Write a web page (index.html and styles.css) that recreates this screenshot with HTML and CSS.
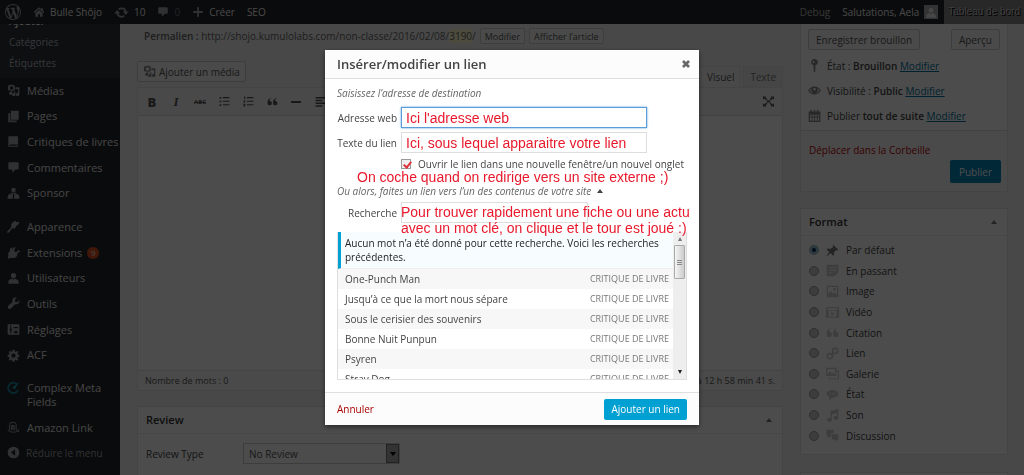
FILE: index.html
```html
<!DOCTYPE html>
<html lang="fr">
<head>
<meta charset="utf-8">
<title>Modifier l’article ‹ Bulle Shôjo</title>
<link rel="stylesheet" href="styles.css">
</head>
<body>
<svg class="sprite" aria-hidden="true">
  <symbol id="wp" viewBox="0 0 20 20"><path d="M20 10c0-5.51-4.49-10-10-10C4.48 0 0 4.49 0 10c0 5.52 4.48 10 10 10 5.51 0 10-4.48 10-10zM7.78 15.37L4.37 6.22c.55-.02 1.17-.08 1.17-.08.5-.06.44-1.13-.06-1.11 0 0-1.45.11-2.37.11-.18 0-.37 0-.58-.01C4.12 2.69 6.87 1.11 10 1.11c2.33 0 4.45.87 6.05 2.34-.68-.11-1.65.39-1.65 1.58 0 .74.45 1.36.9 2.1.35.61.55 1.36.55 2.46 0 1.49-1.4 5-1.4 5l-3.03-8.37c.54-.02.82-.17.82-.17.5-.05.44-1.25-.06-1.22 0 0-1.44.12-2.38.12-.87 0-2.33-.12-2.33-.12-.5-.03-.56 1.2-.06 1.22l.92.08 1.26 3.41zM17.41 10c.24-.64.74-1.87.43-4.25.7 1.29 1.05 2.71 1.05 4.25 0 3.29-1.73 6.24-4.4 7.78.97-2.59 1.94-5.2 2.92-7.78zM6.1 18.09C3.12 16.65 1.11 13.53 1.11 10c0-1.3.23-2.48.72-3.59C3.25 10.3 4.67 14.2 6.1 18.09zm4.03-6.63l2.58 6.98c-.86.29-1.76.45-2.71.45-.79 0-1.57-.11-2.29-.33.81-2.38 1.62-4.74 2.42-7.1z"/></symbol>
  <symbol id="home" viewBox="0 0 20 20"><path d="M10 2 1 10l1.500 1.500L10 5l7.500 6.500L19 10l-2.500-2.300V3h-2.500v2.500zM10 6.500 4 11.700V18h4.500v-4.500h3V18H16v-6.300z"/></symbol>
  <symbol id="update" viewBox="0 0 20 20"><path d="M10.200 3.300a6.700 6.700 0 0 1 6.500 5.400H19.500l-3.800 4.500-3.800-4.500h2.300a4.300 4.300 0 0 0-7-2L5.400 5A6.700 6.700 0 0 1 10.200 3.300zM4.300 6.800l3.800 4.500H5.800a4.300 4.300 0 0 0 7 2l1.800 1.700a6.700 6.700 0 0 1-11.300-3.700H.5z"/></symbol>
  <symbol id="comment" viewBox="0 0 20 20"><path d="M4 2h12a2 2 0 0 1 2 2v7a2 2 0 0 1-2 2h-3l-5 5v-5H4a2 2 0 0 1-2-2V4a2 2 0 0 1 2-2z"/></symbol>
  <symbol id="plus" viewBox="0 0 20 20"><path d="M8.500 2h3v6.500H18v3h-6.500V18h-3v-6.500H2v-3h6.500z"/></symbol>
  <symbol id="media" viewBox="0 0 20 20"><path fill-rule="evenodd" d="M3 2h1l1-1h4l1 1h1q1 0 1 1v6q0 1-1 1H9l-1 1v4.500A2.500 2.500 0 1 1 6.500 12V10H3Q1.500 10 1.500 8.500V3.500Q1.500 2 3 2zm4 1.500a2.700 2.700 0 1 0 0 5.400 2.700 2.700 0 0 0 0-5.400zM13 5h6v11a2.600 2.600 0 1 1-2-2.500V8h-4zM13 12v4.500a2.500 2.500 0 1 1-2-2.500v-3z"/></symbol>
  <symbol id="pages" viewBox="0 0 20 20"><path d="M6 1h12v14H6zM2 5h3v11h10v3H2z"/></symbol>
  <symbol id="book" viewBox="0 0 20 20"><path fill-rule="evenodd" d="M3 2h14v12h-1v2.500h1V18H3q-1-1-1-2V4q0-1 1-2zm1 12.500v2h11v-2z"/></symbol>
  <symbol id="user" viewBox="0 0 20 20"><circle cx="10" cy="5.500" r="4"/><path d="M2 18v-3q0-3 3.500-4L8 10l2 2 2-2 2.500 1Q18 12 18 15v3z"/></symbol>
  <symbol id="sponsor" viewBox="0 0 20 20"><circle cx="10" cy="4.500" r="3.500"/><path d="M6.500 9h7v3l1.500-2q4 2 4 5v3h-8V10h-2v8H1v-3q0-3 4-5l1.500 2z"/></symbol>
  <symbol id="brush" viewBox="0 0 20 20"><path d="m8.500 4 4-3 2 2 5 .500-2 3-2.500 2-3 4.500-3-.500-2 1-3 5L1 20l-1-2 4-4 3-4-1-2.500z"/></symbol>
  <symbol id="plug" viewBox="0 0 20 20"><path d="m11 1 2 2-2.500 4 3 3L18 6l2 2-4.500 4q1 3-2.500 5.500-4 2-7 .5L3 19.500 1 18l1-3V10l2-1 1-5 3-2v4z"/></symbol>
  <symbol id="wrench" viewBox="0 0 20 20"><path d="M17 7.500 13 8l-1-3.500L15 1q-4-1-6 1.500-1.500 2-.500 5L1.500 14Q.5 16 2 17.700q2 1.500 4 0L12.500 11q3 1 5-1Q20 8 18.500 4z"/></symbol>
  <symbol id="settings" viewBox="0 0 20 20"><path fill-rule="evenodd" d="M2 2h16q1 0 1 1v14q0 1-1 1H2q-1 0-1-1V3q0-1 1-1zm3 2v5H4v2h1v5h1.500v-5H8V9H6.500V4zm5 2v2h7V6zm3 5v2h-3v2h3v1.500h1.500V15H17v-2h-2.500v-2z"/></symbol>
  <symbol id="gear" viewBox="0 0 20 20"><path fill-rule="evenodd" d="M8.500 1h3l.5 2.700 1.400.6L15.600 3 17.500 4.800 16 7l.6 1.500L19 9v3l-2.500.5-.6 1.300 1.500 2.200-2 2-2.200-1.500-1.300.6-.5 2.400h-3l-.5-2.500-1.300-.5L4.500 18l-2-2L4 13.800l-.6-1.300L1 12V9l2.400-.5L4 7 2.500 4.800 4.500 3l2.200 1.300L8 3.700zM10 7a3.300 3.300 0 1 0 0 6.600A3.300 3.300 0 0 0 10 7z"/></symbol>
  <symbol id="cmf" viewBox="0 0 20 20"><path d="M15 4.500A8 8 0 1 0 17 14" fill="none" stroke="#1c7f96" stroke-width="3"/><path d="m8 10 4 3 7-12-8 7z" fill="#1c9fb8"/></symbol>
  <symbol id="amazon" viewBox="0 0 20 20"><path d="M4 14V5q0-3 5-3t5 3v9M7 14V7h4v7M9 7v7M1 14q8 6 16 1l1 2M15 14h4" fill="none" stroke="currentColor" stroke-width="1.500"/></symbol>
  <symbol id="collapse" viewBox="0 0 20 20"><path fill-rule="evenodd" d="M10 1a9 9 0 1 0 0 18 9 9 0 0 0 0-18zm2.500 4v10L6 10z"/></symbol>
  <symbol id="quote" viewBox="0 0 20 20"><path d="M9 3Q4.500 4.500 4.500 9A4 4 0 1 1 1 13Q0 4.500 9 3zM19 3q-4.500 1.500-4.500 6A4 4 0 1 1 11 13q-1-8.500 8-10z"/></symbol>
  <symbol id="ul" viewBox="0 0 20 20"><path d="M1 2h3v3H1zm6 0h12v2H7zM1 8.500h3v3H1zm6 0h12v2H7zM1 15h3v3H1zm6 0h12v2H7z"/></symbol>
  <symbol id="ol" viewBox="0 0 20 20"><path d="M2 1h2v5H2zm5 1h12v2H7zM1 8h3v4H1zm6 .5h12v2H7zM1 14h3v5H1zm6 1h12v2H7z"/></symbol>
  <symbol id="left" viewBox="0 0 20 20"><path d="M1 2h18v2.500H1zm0 5h12v2.500H1zm0 5h18v2.500H1zm0 5h12v2.500H1z"/></symbol>
  <symbol id="full" viewBox="0 0 20 20"><path d="M0 1h6L4.500 2.500 8 6 6 8 2.500 4.500 0 7zm20 0v6l-2.500-2.500L14 8l-2-2 3.500-3.500L14 1zM0 19v-6l2.500 2.500L6 12l2 2-3.500 3.500L6 19zm20 0h-6l1.500-1.500L12 14l2-2 3.500 3.500L20 13zM7 8h6v4H7z"/></symbol>
  <symbol id="pin" viewBox="0 0 20 20"><path fill-rule="evenodd" d="M10 0a5 5 0 0 1 1.500 9.800L11 20H9L8.500 9.800A5 5 0 0 1 10 0zM8.500 3a1.500 1.500 0 1 0 0 3 1.500 1.500 0 0 0 0-3z"/></symbol>
  <symbol id="eye" viewBox="0 0 20 20"><path fill-rule="evenodd" d="M0 10q4-6 10-6t10 6q-4 6-10 6T0 10zm2 0q3.500 4.500 8 4.500t8-4.500q-2-2.500-4-3.500a5 5 0 1 1-8 0q-2 1-4 3.500zm8-4a2 2 0 1 0 0 4 2 2 0 0 0 0-4z"/></symbol>
  <symbol id="calendar" viewBox="0 0 20 20"><path fill-rule="evenodd" d="M1 4h3V1h2v3h3V1h2v3h3V1h2v3h3v16H1zm2 5v2.500h2.500V9zm4 0v2.500h2.500V9zm4 0v2.500h2.500V9zm4 0v2.500h2V9zM3 13v5h2.500v-5zm4 0v5h2.500v-5zm4 0v5h2.500v-5zm4 0v5h2v-5z"/></symbol>
  <symbol id="pushpin" viewBox="0 0 20 20"><path d="m11 1 8 8-1.500 1-2-.5-3.500 3.500.5 4-1.500 1-4-4L0 20l5-8-4-3.500L2 7l4.500.5L11 4.500 10.500 2z"/></symbol>
  <symbol id="aside" viewBox="0 0 20 20"><path fill-rule="evenodd" d="M1 1h18v12l-6 6H1zm3 4v1.500h12V5zm0 4v1.500h12V9zm0 4v1.500h6V13z"/></symbol>
  <symbol id="image" viewBox="0 0 20 20"><path fill-rule="evenodd" d="M1 1h18v18H1zm2 2v14h14V3z"/><path d="m3 15 4-6 3 4 3-2 4 4v2H3z"/><circle cx="13" cy="6.500" r="2"/></symbol>
  <symbol id="video" viewBox="0 0 20 20"><path fill-rule="evenodd" d="M0 2h20v16H0zm2 1.500V6h16V3.500zM4 7v9.500h12V7zm4 1.500 5 3.500-5 3.500z"/></symbol>
  <symbol id="link" viewBox="0 0 20 20"><g fill="none" stroke="currentColor" stroke-width="2.500"><circle cx="14" cy="6" r="4"/><circle cx="6" cy="14" r="4"/><path d="m8 12 4-4"/></g></symbol>
  <symbol id="gallery" viewBox="0 0 20 20"><path fill-rule="evenodd" d="M0 1h16v13H0zm2 2v9h12V3zM17 5h3v14H4v-3h1.500v1.500h13V7H17z"/><path d="m2 11 4-4 3 3 2-1 3 3H2z"/></symbol>
  <symbol id="status" viewBox="0 0 20 20"><path fill-rule="evenodd" d="M10 3c5 0 9 2.500 9 6s-4 6-9 6l-5 4v-5c-2.500-1-4-3-4-5 0-3.500 4-6 9-6zM5 8v2h2V8zm4 0v2h2V8zm4 0v2h2V8z"/></symbol>
  <symbol id="audio" viewBox="0 0 20 20"><path d="M7 3 19 0v14a3.500 3 0 1 1-2-3V6L9 8v9a3.500 3 0 1 1-2-3z"/></symbol>
  <symbol id="chat" viewBox="0 0 20 20"><path d="M1 1h11v5H8v6H6l-3 2v-3H1zM9 8h10v8h-2v3l-4-3H9z"/></symbol>
</svg>

<header class="adminbar">
  <a href="#" aria-label="WordPress"><svg class="logo"><use href="#wp"/></svg></a>
  <a href="#"><svg><use href="#home"/></svg>Bulle Shôjo</a>
  <a href="#"><svg class="refresh"><use href="#update"/></svg>10</a>
  <a href="#" class="none"><svg><use href="#comment"/></svg>0</a>
  <a href="#"><svg><use href="#plus"/></svg>Créer</a>
  <a href="#">SEO</a>
  <a href="#" class="debug">Debug</a>
  <a href="#" class="account">Salutations, Aela <span class="avatar"><svg><use href="#user"/></svg></span></a>
  <a href="#" class="dash">Tableau de bord</a>
</header>

<div class="page">
  <nav class="sidebar">
    <div class="submenu"><a href="#" class="current">Ajouter</a><a href="#">Catégories</a><a href="#">Étiquettes</a></div>
    <div class="group five">
      <a href="#"><svg><use href="#media"/></svg>Médias</a>
      <a href="#"><svg><use href="#pages"/></svg>Pages</a>
      <a href="#"><svg><use href="#book"/></svg>Critiques de livres</a>
      <a href="#"><svg><use href="#comment"/></svg>Commentaires</a>
      <a href="#"><svg><use href="#sponsor"/></svg>Sponsor</a>
    </div>
    <div class="group six">
      <a href="#"><svg><use href="#brush"/></svg>Apparence</a>
      <a href="#"><svg><use href="#plug"/></svg>Extensions <span class="count">9</span></a>
      <a href="#"><svg><use href="#user"/></svg>Utilisateurs</a>
      <a href="#"><svg><use href="#wrench"/></svg>Outils</a>
      <a href="#"><svg><use href="#settings"/></svg>Réglages</a>
      <a href="#"><svg><use href="#gear"/></svg>ACF</a>
    </div>
    <div class="group">
      <a href="#" class="tall"><svg><use href="#cmf"/></svg><span>Complex Meta Fields</span></a>
      <a href="#"><svg><use href="#amazon"/></svg>Amazon Link</a>
      <a href="#" class="fold"><svg><use href="#collapse"/></svg>Réduire le menu</a>
    </div>
  </nav>

  <main class="content">
    <section class="main">
      <div class="permalink"><span><strong>Permalien :</strong> http://shojo.kumulolabs.com/non-classe/2016/02/08/<mark>3190</mark>/</span>
        <button class="btn small">Modifier</button><button class="btn small">Afficher l’article</button></div>
      <div class="tools">
        <button class="btn add"><svg><use href="#media"/></svg>Ajouter un média</button>
        <div class="tabs"><button class="tab on">Visuel</button><button class="tab">Texte</button></div>
      </div>
      <div class="editor">
        <div class="toolbar">
          <button class="b">B</button><button class="i">I</button><button class="abc">ABC</button>
          <button aria-label="Liste"><svg><use href="#ul"/></svg></button>
          <button aria-label="Liste numérotée"><svg><use href="#ol"/></svg></button>
          <button aria-label="Citation"><svg><use href="#quote"/></svg></button>
          <button aria-label="Ligne"><span class="rule"></span></button>
          <button aria-label="Aligner à gauche"><svg><use href="#left"/></svg></button>
          <button aria-label="Plein écran" class="full"><svg><use href="#full"/></svg></button>
        </div>
        <div class="canvas"></div>
        <div class="status"><span>Nombre de mots : 0</span><span>Brouillon enregistré à 12 h 58 min 41 s.</span></div>
      </div>
      <div class="box review">
        <h2>Review<i class="up"></i></h2>
        <div class="field"><label for="rtype">Review Type</label>
          <span class="pick"><select id="rtype"><option>No Review</option></select><i class="down"></i></span></div>
      </div>
    </section>

    <aside class="side">
      <div class="box publish">
        <div class="drafts"><button class="btn">Enregistrer brouillon</button><button class="btn">Aperçu</button></div>
        <p><svg><use href="#pin"/></svg><span>État : <strong>Brouillon</strong> <a href="#">Modifier</a></span></p>
        <p><svg><use href="#eye"/></svg><span>Visibilité : <strong>Public</strong> <a href="#">Modifier</a></span></p>
        <p><svg><use href="#calendar"/></svg><span>Publier <strong>tout de suite</strong> <a href="#">Modifier</a></span></p>
        <div class="actions"><a href="#" class="trash">Déplacer dans la Corbeille</a><button class="primary">Publier</button></div>
      </div>
      <div class="box format">
        <h2>Format<i class="up"></i></h2>
        <div class="formats">
          <label><input type="radio" name="f" checked><svg class="dark"><use href="#pushpin"/></svg>Par défaut</label>
          <label><input type="radio" name="f"><svg><use href="#aside"/></svg>En passant</label>
          <label><input type="radio" name="f"><svg><use href="#image"/></svg>Image</label>
          <label><input type="radio" name="f"><svg><use href="#video"/></svg>Vidéo</label>
          <label><input type="radio" name="f"><svg><use href="#quote"/></svg>Citation</label>
          <label><input type="radio" name="f"><svg><use href="#link"/></svg>Lien</label>
          <label><input type="radio" name="f"><svg><use href="#gallery"/></svg>Galerie</label>
          <label><input type="radio" name="f"><svg><use href="#status"/></svg>État</label>
          <label><input type="radio" name="f"><svg><use href="#audio"/></svg>Son</label>
          <label><input type="radio" name="f"><svg><use href="#chat"/></svg>Discussion</label>
        </div>
      </div>
      <div class="box next"></div>
    </aside>
  </main>
</div>

<div class="overlay">
  <form class="modal" role="dialog" aria-labelledby="dlg">
    <div class="head"><h1 id="dlg">Insérer/modifier un lien</h1>
      <button type="button" aria-label="Fermer"><svg viewBox="0 0 10 10"><path d="m2 2 6 6M8 2 2 8" stroke="currentColor" stroke-width="2.600"/></svg></button></div>
    <div class="body">
      <p class="hint">Saisissez l’adresse de destination</p>
      <div class="row"><label for="url">Adresse web</label><input id="url" class="text focus" type="text" value="Ici l'adresse web"></div>
      <div class="row"><label for="txt">Texte du lien</label><input id="txt" class="text" type="text" value="Ici, sous lequel apparaitre votre lien"></div>
      <div class="check"><input type="checkbox" id="blank" checked><label for="blank">Ouvrir le lien dans une nouvelle fenêtre/un nouvel onglet</label></div>
      <p class="note">On coche quand on redirige vers un site externe ;)</p>
      <p class="hint toggle">Ou alors, faites un lien vers l’un des contenus de votre site<i class="up"></i></p>
      <div class="row search"><label for="q">Recherche</label><input id="q" class="text" type="search">
        <p class="note over">Pour trouver rapidement une fiche ou une actu<br>avec un mot clé, on clique et le tour est joué :)</p></div>
      <div class="results">
        <div class="items">
          <p class="notice">Aucun mot n’a été donné pour cette recherche. Voici les recherches précédentes.</p>
          <ul>
            <li>One-Punch Man<span>CRITIQUE DE LIVRE</span></li>
            <li>Jusqu’à ce que la mort nous sépare<span>CRITIQUE DE LIVRE</span></li>
            <li>Sous le cerisier des souvenirs<span>CRITIQUE DE LIVRE</span></li>
            <li>Bonne Nuit Punpun<span>CRITIQUE DE LIVRE</span></li>
            <li>Psyren<span>CRITIQUE DE LIVRE</span></li>
            <li>Stray Dog<span>CRITIQUE DE LIVRE</span></li>
          </ul>
        </div>
        <div class="bar"><i class="up"></i><div class="thumb"></div><i class="down"></i></div>
      </div>
    </div>
    <div class="foot"><a href="#">Annuler</a><button type="button" class="primary">Ajouter un lien</button></div>
  </form>
</div>
</body>
</html>
```

FILE: styles.css
```css
* { box-sizing: border-box; }
body { margin: 0; height: 100vh; overflow: hidden; background: #f1f1f1; color: #444; font: 10px/14px "Open Sans", sans-serif; }
h1, h2, p, ul { margin: 0; padding: 0; }
h1, h2 { font-weight: 600; }
ul { list-style: none; }
a { color: inherit; text-decoration: none; }
button, input, select { font: inherit; color: inherit; margin: 0; padding: 0; border: 0; background: none; }
svg { fill: currentColor; flex: none; }
.sprite { position: absolute; width: 0; height: 0; }
.up, .down { display: inline-block; width: 0; height: 0; border: 3px solid transparent; }
.up { border-top: 0; border-bottom: 4px solid #777; }
.down { border-bottom: 0; border-top: 4px solid #222; }

/* Admin bar */
.adminbar { position: fixed; inset: 0 0 auto; z-index: 2; height: 24px; padding-left: 5px; display: flex; align-items: center; gap: 12px; background: #222529; color: #eee; }
.adminbar a { display: flex; align-items: center; gap: 5px; }
.adminbar svg { width: 12px; height: 12px; color: #a0a5aa; }
.adminbar .logo { width: 16px; height: 16px; }
.adminbar .refresh { width: 15px; height: 15px; }
.adminbar .none { color: #777; }
.adminbar .debug { margin-left: auto; color: #b8b8b8; }
.adminbar .avatar { display: flex; align-items: end; justify-content: center; width: 14px; height: 14px; background: #aaa; }
.adminbar .avatar svg { color: #eee; }
.adminbar .dash { align-self: stretch; margin-left: -6px; padding: 0 4px; background: #888; color: #ccc; font-family: "Liberation Sans", sans-serif; text-shadow: 1px 1px 0 #000; }

.page { display: flex; min-height: 100vh; padding-top: 11px; }

/* Side menu */
.sidebar { flex: none; width: 120px; background: #222529; color: #e4e4e4; font-size: 11px; margin-top: -11px; padding-top: 11px; }
.submenu { background: #2f353b; padding-bottom: 4px; }
.submenu a { display: block; padding-left: 9px; line-height: 21px; font-size: 10px; color: #b4b9be; }
.submenu .current { color: #fff; font-weight: 600; }
.group { display: flex; flex-direction: column; margin-bottom: 8px; }
.five { min-height: 128px; }
.six { min-height: 154px; }
.group a { flex: 1 0 auto; min-height: 25px; display: flex; align-items: center; gap: 7px; padding-left: 7px; white-space: nowrap; }
.group svg { width: 13px; height: 13px; color: #a0a5aa; }
.group .tall { min-height: 39px; align-items: start; padding-top: 5px; white-space: normal; }
.group .fold { gap: 6px; font-size: 10px; color: #a0a5aa; }
.count { width: 12px; height: 12px; margin-left: -2px; border-radius: 50%; background: #d54e21; font-size: 8px; line-height: 12px; text-align: center; }

/* Content */
.content { flex: 1; display: grid; grid-template-columns: minmax(0, 1fr) 208px; gap: 17px; padding: 0 16px 0 17px; align-items: start; }
.btn { height: 21px; padding: 0 7px; border: 1px solid #ccc; border-radius: 2px; background: #f7f7f7; color: #555; }
.permalink { display: flex; align-items: center; gap: 4px; height: 16px; margin-top: 17px; padding-left: 7px; color: #666; white-space: nowrap; }
.permalink mark { background: #fffbcc; color: inherit; }
.btn.small { height: 16px; padding: 0 4px; font-size: 9px; line-height: 13px; }
.permalink strong { font-weight: 600; }
.tools { display: flex; justify-content: space-between; margin-top: 17px; height: 26px; }
.btn.add { display: flex; align-items: center; gap: 3px; padding: 0 5px; }
.add svg { width: 13px; height: 13px; color: #888; }
.tabs { display: flex; align-items: end; gap: 3px; }
.tab { height: 21px; padding: 0 6px; border: 1px solid #e5e5e5; border-bottom: 0; background: #ebebeb; color: #777; }
.tab.on { padding: 0 5px 0 9px; background: #f5f5f5; color: #555; }
.editor { border: 1px solid #e5e5e5; background: #fff; }
.toolbar { display: flex; align-items: center; height: 28px; padding: 0 2px; background: #f5f5f5; border-bottom: 1px solid #dedede; color: #555; }
.toolbar button { display: flex; align-items: center; justify-content: center; width: 24px; height: 24px; }
.toolbar svg { width: 11px; height: 11px; }
.toolbar .full { margin-left: auto; }
.toolbar .b { font-weight: 800; font-size: 13px; }
.toolbar .i { font: italic bold 13px "Liberation Serif", serif; }
.toolbar .abc { font-size: 6px; font-weight: 700; text-decoration: line-through; }
.rule { width: 10px; height: 2px; background: currentColor; }
.canvas { height: 254px; }
.status { display: flex; justify-content: space-between; padding: 2px 7px; background: #f7f7f7; border-top: 1px solid #e5e5e5; color: #555; font-size: 9px; line-height: 15px; }
.box { background: #fff; border: 1px solid #e5e5e5; }
.box h2 { display: flex; align-items: center; justify-content: space-between; height: 27px; padding: 0 10px 0 8px; border-bottom: 1px solid #eee; color: #333; font-size: 11px; }
.review { margin-top: 15px; }
.field { display: grid; grid-template-columns: 97px 157px; align-items: center; padding: 9px 8px 20px; }
.pick { display: flex; border: 1px solid #ccc; position: relative; }
.pick select { width: 100%; height: 19px; padding-left: 5px; appearance: none; font-size: 10px; color: #555; }
.pick .down { position: absolute; right: 0; top: 0; width: 13px; height: 19px; border: 1px solid #777; background: #aaa; }
.pick .down::after { content: ""; position: absolute; left: 3px; top: 7px; border: 3px solid transparent; border-top: 4px solid #000; border-bottom: 0; }

/* Right column */
.publish { padding-top: 17px; }
.drafts { display: flex; justify-content: space-between; padding: 0 7px; margin-bottom: 3px; }
.publish p { display: flex; align-items: center; gap: 6px; height: 25px; padding-left: 7px; }
.publish p svg { width: 13px; height: 13px; color: #888; }
.publish p a { color: #0074a2; text-decoration: underline; }
.publish strong { font-weight: 600; }
.actions { display: flex; flex-direction: column; align-items: start; gap: 3px; margin-top: 2px; padding: 12px 6px 8px 8px; background: #f9f9f9; border-top: 1px solid #ddd; }
.trash { color: #b00; }
.primary { height: 21px; padding: 0 7px; border-radius: 2px; background: #00a0d2; color: #fff; }
.actions .primary { align-self: end; height: 23px; padding: 0 9px; background: #0085ba; }
.format { margin-top: 16px; }
.formats { display: grid; grid-auto-rows: 1fr; min-height: 218px; padding: 4px 8px 8px; }
.formats label { display: flex; align-items: center; gap: 7px; }
.formats input { appearance: none; width: 10px; height: 10px; border-radius: 50%; border: 1px solid #999; background: #ccc; }
.formats input:checked { border: 3px solid #9bc; background: #035; }
.formats svg { width: 13px; height: 13px; color: #ccc; }
.formats .dark { color: #777; }
.next { margin-top: 17px; height: 60px; }

/* Link dialog */
.overlay { position: fixed; inset: 0; z-index: 3; display: flex; align-items: center; justify-content: center; background: rgba(0, 0, 0, .7); }
.modal { width: 374px; background: #fff; box-shadow: 0 2px 5px rgba(0, 0, 0, .5); }
.head { display: flex; align-items: center; justify-content: space-between; height: 29px; padding: 0 8px 0 12px; background: #fcfcfc; border-bottom: 1px solid #dfdfdf; }
.head h1 { font-size: 13px; color: #444; }
.head button { display: flex; color: #666; }
.head svg { width: 10px; height: 10px; }
.body { padding: 7px 12px 12px; }
.hint { font-style: italic; color: #666; }
.row { display: flex; align-items: center; margin-top: 4px; position: relative; }
.row label { width: 60px; margin-right: 4px; text-align: right; white-space: nowrap; }
.body .hint:first-child + .row { margin-top: 7px; }
.text { width: 246px; height: 21px; padding: 0 4px; border: 1px solid #ddd; color: #e8192c; font: 14px "Liberation Sans", sans-serif; }
.text.focus { border-color: #5b9dd9; box-shadow: 0 0 2px #5b9dd9; }
.check { display: flex; align-items: center; gap: 7px; margin: 5px 0 0 64px; line-height: 12px; white-space: nowrap; }
.check input { appearance: none; width: 10px; height: 10px; border: 1px solid #999; background: #eee; position: relative; }
.check input::after { content: ""; position: absolute; left: 3px; top: 0; width: 3px; height: 6px; border: solid #e0303a; border-width: 0 2px 2px 0; transform: rotate(40deg); }
.note { color: #e8192c; font: 14px/14px "Liberation Sans", sans-serif; white-space: nowrap; }
.check + .note { margin-left: 20px; }
.toggle .up { margin-left: 6px; vertical-align: 2px; border-bottom-color: #444; }
.search .text { width: 187px; }
.over { position: absolute; left: 64px; top: 2px; line-height: 16px; }
.results { display: flex; height: 148px; margin-top: 9px; border: 1px solid #dfdfdf; border-top: 0; overflow: hidden; }
.items { flex: 1; }
.notice { padding: 4px 8px 4px 4px; border-left: 3px solid #00a0d2; border-bottom: 1px solid #eee; background: #f7fcfe; color: #222; }
.items li { display: flex; justify-content: space-between; padding: 3px 4px 3px 7px; }
.items li:nth-child(odd) { background: #f7f7f7; }
.items li span { font-size: 9px; color: #777; }
.bar { display: flex; flex-direction: column; align-items: center; gap: 4px; width: 13px; padding: 5px 0; background: #eee; }
.bar .up, .bar .down { border-left-width: 2px; border-right-width: 2px; }
.bar .down { margin-top: auto; }
.thumb { width: 11px; height: 34px; border: 1px solid #aaa; border-radius: 1px; background: linear-gradient(#888 1px, transparent 1px 2px, #888 2px 3px, transparent 3px 4px, #888 4px) center / 5px 5px no-repeat, linear-gradient(90deg, #f5f5f5, #ccc); }
.foot { display: flex; align-items: center; justify-content: space-between; height: 33px; padding: 0 12px; background: #fcfcfc; border-top: 1px solid #dfdfdf; }
.foot a { color: #a00; }
```
